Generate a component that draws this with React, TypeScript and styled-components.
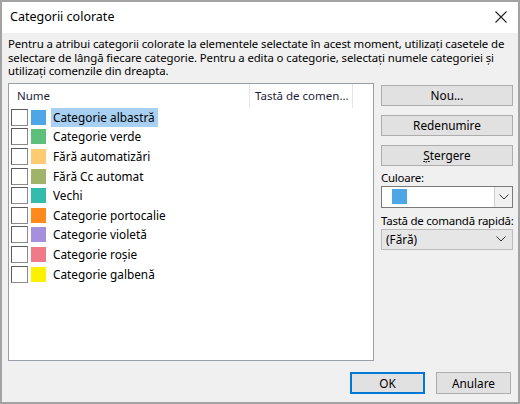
import styled, { createGlobalStyle } from "styled-components";

const Global = createGlobalStyle`
  html, body { margin: 0; padding: 0; background: #fff; }
  body { font-family: "Noto Sans", "Liberation Sans", sans-serif; font-size: 12px; color: #000; }
  * { box-sizing: border-box; }
`;

const categories = [
  { name: "Categorie albastră", color: "#4ea6e6", selected: true },
  { name: "Categorie verde", color: "#5cbf7a" },
  { name: "Fără automatizări", color: "#fdcb71" },
  { name: "Fără Cc automat", color: "#a0b368" },
  { name: "Vechi", color: "#33bbac" },
  { name: "Categorie portocalie", color: "#fd8a1a" },
  { name: "Categorie violetă", color: "#a690dd" },
  { name: "Categorie roșie", color: "#ef7b88" },
  { name: "Categorie galbenă", color: "#fef100" },
];

function Chevron() {
  return (
    <svg width="10" height="6" viewBox="0 0 10 6">
      <path d="M0.5 0.5 L5 5 L9.5 0.5" fill="none" stroke="#333" strokeWidth="1" />
    </svg>
  );
}

export default function App() {
  return (
    <>
      <Global />
      <Dialog>
        <TitleBar>
          <Title>Categorii colorate</Title>
          <Close>
            <svg width="12" height="12" viewBox="0 0 12 12">
              <path d="M0.5 0.5 L11.5 11.5 M11.5 0.5 L0.5 11.5" stroke="#222" strokeWidth="1.1" />
            </svg>
          </Close>
        </TitleBar>
        <Body>
          <Intro>
            Pentru a atribui categorii colorate la elementele selectate în acest moment, utilizați casetele de
            selectare de lângă fiecare categorie. Pentru a edita o categorie, selectați numele categoriei și
            utilizați comenzile din dreapta.
          </Intro>
          <Main>
            <ListBox>
              <Header>
                <HeadCell>Nume</HeadCell>
                <HeadCell $divider>Tastă de comen...</HeadCell>
                <HeadCell $divider />
              </Header>
              {categories.map((c) => (
                <Row key={c.name}>
                  <Check />
                  <Swatch $color={c.color} />
                  <Label $selected={c.selected}>{c.name}</Label>
                </Row>
              ))}
            </ListBox>
            <Side>
              <Button>Nou...</Button>
              <Button>Redenumire</Button>
              <Button $space={4}>
                <u>Ș</u>tergere
              </Button>
              <FieldLabel>Culoare:</FieldLabel>
              <ColorCombo>
                <ComboValue>
                  <Swatch $color="#4ea6e6" />
                </ComboValue>
                <ComboArrow>
                  <Chevron />
                </ComboArrow>
              </ColorCombo>
              <FieldLabel>Tastă de comandă rapidă:</FieldLabel>
              <KeyCombo>
                <span>(Fără)</span>
                <Chevron />
              </KeyCombo>
            </Side>
          </Main>
          <Footer>
            <Button $primary $wide $space={0}>OK</Button>
            <Button $wide $space={0}>Anulare</Button>
          </Footer>
        </Body>
      </Dialog>
    </>
  );
}

const Dialog = styled.div`
  width: 520px;
  height: 404px;
  border: 2px solid #a3a3a3;
  display: flex;
  flex-direction: column;
  background: #f0f0f0;
`;

const TitleBar = styled.div`
  height: 31px;
  background: #fff;
  display: flex;
  align-items: center;
  justify-content: space-between;
  padding: 0 11px 0 8px;
`;

const Title = styled.div`
  font-size: 12.5px;
  margin-top: -2px;
`;

const Close = styled.div`
  display: flex;
  margin-top: -2px;
`;

const Body = styled.div`
  flex: 1;
  display: flex;
  flex-direction: column;
  padding: 4px 5px 8px 6px;
`;

const Intro = styled.p`
  margin: 0;
  font-size: 11.4px;
  line-height: 13.5px;
  letter-spacing: -0.1px;
`;

const Main = styled.div`
  display: flex;
  gap: 7px;
  margin-top: 5px;
  height: 278px;
`;

const ListBox = styled.div`
  width: 366px;
  flex-shrink: 0;
  background: #fff;
  border: 1px solid #9a9ea6;
  padding: 0 0 0 2px;
`;

const Header = styled.div`
  display: grid;
  grid-template-columns: 240px 103px 1fr;
  height: 24px;
  margin-left: -2px;
`;

const HeadCell = styled.div<{ $divider?: boolean }>`
  padding: 4px 0 0 ${(p) => (p.$divider ? 5 : 8)}px;
  border-left: ${(p) => (p.$divider ? "1px solid #e5e5e5" : "none")};
  color: #1e1e3c;
  font-size: 11.5px;
  white-space: nowrap;
  overflow: hidden;
`;

const Row = styled.div`
  display: flex;
  align-items: center;
  height: 19.6px;
  gap: 3px;
`;

const Check = styled.div`
  width: 17px;
  height: 17px;
  border: 1px solid #5a5a5a;
  border-right-color: #8a8a8a;
  border-bottom-color: #8a8a8a;
  background: #fff;
`;

const Swatch = styled.div<{ $color: string }>`
  width: 15px;
  height: 15px;
  background: ${(p) => p.$color};
`;

const Label = styled.span<{ $selected?: boolean }>`
  margin-left: 2px;
  padding: 1px 3px 2px 2px;
  font-size: 11.8px;
  background: ${(p) => (p.$selected ? "#a8d0f2" : "transparent")};
`;

const Side = styled.div`
  width: 132px;
  min-width: 0;
  display: flex;
  flex-direction: column;
  padding-top: 2px;
`;

const Button = styled.button<{ $primary?: boolean; $wide?: boolean; $space?: number }>`
  font-family: inherit;
  font-size: 11.8px;
  color: #000;
  height: ${(p) => (p.$wide ? 22 : 21)}px;
  width: ${(p) => (p.$wide ? "75px" : "100%")};
  background: #e1e1e1;
  border: ${(p) => (p.$primary ? "2px solid #0078d7" : "1px solid #adadad")};
  padding: 0;
  margin-bottom: ${(p) => (p.$space ?? 9)}px;
  ${(p) => (p.$primary ? "box-shadow: inset 0 0 0 1px #e1e1e1;" : "")}
  u { text-decoration: underline; }
`;

const FieldLabel = styled.div`
  font-size: 11.5px;
  letter-spacing: -0.25px;
  white-space: nowrap;
  margin: 0 0 1px 0;
`;

const ColorCombo = styled.div`
  display: flex;
  height: 22px;
  border: 1px solid #7a7a7a;
  background: #fff;
  margin-bottom: 5px;
`;

const ComboValue = styled.div`
  flex: 1;
  display: flex;
  align-items: center;
  padding-left: 10px;
`;

const ComboArrow = styled.div`
  width: 18px;
  display: flex;
  align-items: center;
  justify-content: center;
  background: #f0f0f0;
  border-left: 1px solid #cfcfcf;
`;

const KeyCombo = styled.div`
  display: flex;
  align-items: center;
  justify-content: space-between;
  height: 21px;
  padding: 0 6px 0 4px;
  border: 1px solid #bcbcbc;
  background: #e6e6e6;
  font-size: 11.8px;
`;

const Footer = styled.div`
  display: flex;
  justify-content: flex-end;
  gap: 11px;
  margin-top: auto;
  padding-right: 2px;
`;
